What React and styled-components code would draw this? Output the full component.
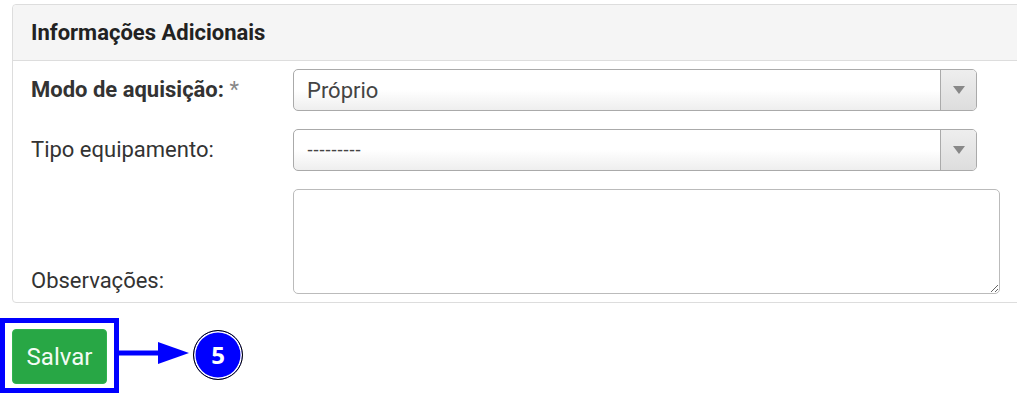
import React from 'react';
import styled, { createGlobalStyle } from 'styled-components';

const GlobalStyle = createGlobalStyle`
    body {
        margin: 0;
        background: #ffffff;
        font-family: Roboto, "Liberation Sans", sans-serif;
        color: #333333;
        overflow: hidden;
    }
`;

const Page = styled.div`
    width: 1017px;
    height: 404px;
    overflow: hidden;
    padding-top: 4px;
    box-sizing: border-box;
`;

const Panel = styled.div`
    margin-left: 12px;
    width: 1030px;
    border: 1px solid #dddddd;
    border-radius: 4px;
    background: #ffffff;
`;

const PanelHeader = styled.div`
    height: 55px;
    display: flex;
    align-items: center;
    padding-left: 18px;
    background: #f5f5f5;
    border-bottom: 1px solid #dddddd;
    border-radius: 4px 4px 0 0;
    font-weight: bold;
    font-size: 22px;
    color: #222222;
`;

const PanelBody = styled.div`
    display: flex;
    flex-direction: column;
    gap: 18px;
    padding: 8px 0 8px 18px;
`;

const Row = styled.div`
    display: grid;
    grid-template-columns: 262px auto;
    align-items: ${(p) => (p.$bottom ? 'end' : 'center')};
`;

const Label = styled.label`
    font-size: 22px;
    font-weight: ${(p) => (p.$bold ? 'bold' : 'normal')};
    color: #333333;
    padding-bottom: ${(p) => (p.$bottom ? '1px' : '2px')};
`;

const Required = styled.span`
    font-weight: normal;
    color: #888888;
`;

const Select = styled.div`
    width: 684px;
    height: 42px;
    box-sizing: border-box;
    display: flex;
    border: 1px solid #aaaaaa;
    border-radius: 5px;
    background: linear-gradient(#ffffff 50%, #eeeeee);
    overflow: hidden;
`;

const SelectValue = styled.div`
    flex: 1;
    display: flex;
    align-items: center;
    padding-left: 13px;
    font-size: ${(p) => (p.$dashes ? '18px' : '22px')};
    font-family: ${(p) => (p.$dashes ? '"Liberation Sans", Arial, sans-serif' : 'Roboto, sans-serif')};
    color: #444444;
`;

const SelectArrow = styled.div`
    width: 35px;
    border-left: 1px solid #aaaaaa;
    background: linear-gradient(#eeeeee, #dddddd);
    display: flex;
    align-items: center;
    justify-content: center;

    &::after {
        content: '';
        border-left: 6px solid transparent;
        border-right: 6px solid transparent;
        border-top: 8px solid #888888;
    }
`;

const TextArea = styled.textarea`
    width: 707px;
    height: 105px;
    box-sizing: border-box;
    border: 1px solid #bbbbbb;
    border-radius: 5px;
    background: #ffffff;
    font-family: Roboto, sans-serif;
    font-size: 16px;
    margin: 0;
    display: block;
`;

const ActionRow = styled.div`
    display: flex;
    align-items: center;
    margin-top: 15px;
`;

const Frame = styled.div`
    border: 5px solid #0000ff;
    padding: 6px 7px 4px 7px;
`;

const SaveButton = styled.button`
    width: 95px;
    height: 55px;
    background: #28a745;
    border: 1px solid #2fb34e;
    border-radius: 4px;
    color: #f4fbf5;
    font-family: Roboto, sans-serif;
    font-size: 24px;
    cursor: pointer;
    padding: 0;
`;

const Arrow = styled.svg`
    display: block;
    margin-top: -6px;
`;

const Badge = styled.div`
    width: 50px;
    height: 50px;
    box-sizing: border-box;
    margin-left: 3px;
    margin-top: -2px;
    border-radius: 50%;
    background: #0000ff;
    border: 1.5px solid #000000;
    box-shadow: inset 0 0 0 1.5px #ffffff;
    display: flex;
    align-items: center;
    justify-content: center;
    color: #ffffff;
    font-family: "Open Sans", sans-serif;
    font-weight: bold;
    font-size: 24px;
`;

const App = () => {
    return (
        <React.Fragment>
            <GlobalStyle />
            <Page>
                <Panel>
                    <PanelHeader>Informações Adicionais</PanelHeader>
                    <PanelBody>
                        <Row>
                            <Label $bold>
                                Modo de aquisição: <Required>*</Required>
                            </Label>
                            <Select>
                                <SelectValue>Próprio</SelectValue>
                                <SelectArrow />
                            </Select>
                        </Row>
                        <Row>
                            <Label>Tipo equipamento:</Label>
                            <Select>
                                <SelectValue $dashes>---------</SelectValue>
                                <SelectArrow />
                            </Select>
                        </Row>
                        <Row $bottom>
                            <Label $bottom>Observações:</Label>
                            <TextArea />
                        </Row>
                    </PanelBody>
                </Panel>
                <ActionRow>
                    <Frame>
                        <SaveButton>Salvar</SaveButton>
                    </Frame>
                    <Arrow width="71" height="26" viewBox="0 0 71 26">
                        <rect x="0" y="10.5" width="42" height="5" fill="#0000ff" />
                        <polygon points="39,2 70,13 39,24" fill="#0000ff" />
                    </Arrow>
                    <Badge>5</Badge>
                </ActionRow>
            </Page>
        </React.Fragment>
    );
};

export default App;
